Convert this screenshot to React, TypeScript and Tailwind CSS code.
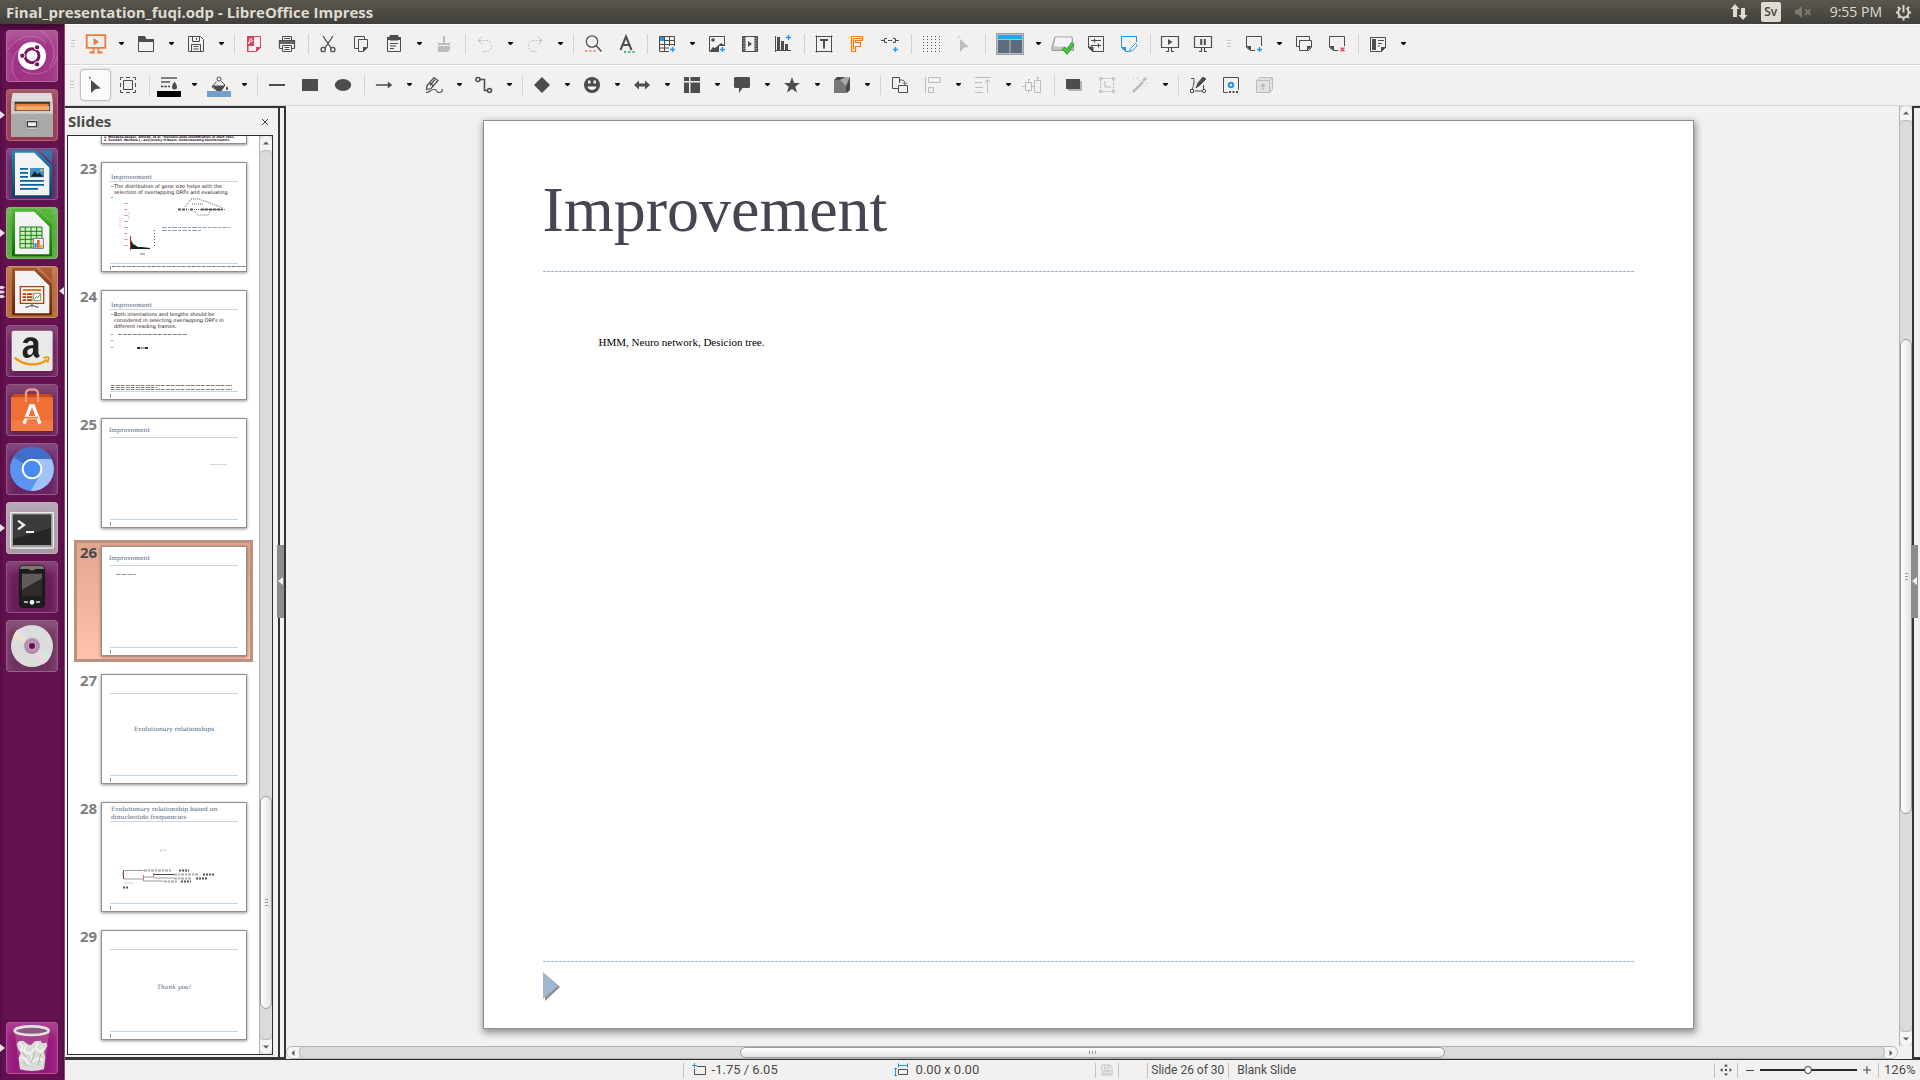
import React from "react";

const D = "#4d4d4d";
const G = "#bdbdbd";
const B = "#1e96f0";

const icons: Record<string, React.ReactNode> = {
  impress: (
    <g stroke="#ee7c37" fill="none" strokeWidth="1.5">
      <path d="M2.7 3.2h18.6v12.6H2.7zM9.5 16v4M14.5 16v4M5.5 20.5h5M13.5 20.5h5" strokeWidth="1.8" />
      <path d="M9.5 6l5.500 3.800-5.500 3.800z" fill="#ee7c37" stroke="none" />
    </g>
  ),
  open: (
    <g>
      <path d="M4 4h7l1.500 3H20v3H4z" fill={D} />
      <path d="M4.500 9.500h15v10h-15z" fill="none" stroke={D} />
    </g>
  ),
  save: (
    <g fill="none" stroke={D}>
      <path d="M4.500 4.500h12l3 3v12h-15z" />
      <path d="M8.500 4.500v5h7v-5M12.500 6v2M7.500 19.500v-7h9v7M9.500 14.500h5M9.500 17h5" />
    </g>
  ),
  pdf: (
    <g>
      <path d="M5.500 4.500h13v11l-4 4h-9v-15z" fill="none" stroke="#d8425a" />
      <path d="M5 4h7v10H5z" fill="#d8425a" />
      <path d="M6.500 12l2-6 2 3-4 1.500" fill="none" stroke="#f2f1ef" />
      <path d="M14 20v-5h5z" fill="#d8425a" />
      <path d="M5 13h1.500v7H5z" fill="#d8425a" />
    </g>
  ),
  print: (
    <g fill="none" stroke={D}>
      <path d="M7.500 8.500v-4h9v4M9 6.500h6" />
      <path d="M4.500 16.500v-8h15v8" strokeWidth="1.200" />
      <path d="M4 9h16v3H4z" fill={D} stroke="none" opacity=".85" />
      <path d="M4.500 16.500h3M16.500 16.500h3" />
      <path d="M7.500 13.500h9v6h-9zM9.500 15.500h5M9.500 17.500h5" fill="#f2f1ef" />
    </g>
  ),
  cut: (
    <g fill="none" stroke={D} strokeWidth="1.300">
      <path d="M7 4l8 12M17 4L9 16" />
      <circle cx="7.200" cy="17.500" r="2.200" />
      <circle cx="16.800" cy="17.500" r="2.200" />
    </g>
  ),
  copy: (
    <g fill="none" stroke={D}>
      <path d="M9 16.500H5.500v-12h10V7" />
      <path d="M9.500 7.500h9v8l-4 4h-5z" fill="#f2f1ef" />
      <path d="M14 20v-5h5z" fill={D} stroke="none" />
    </g>
  ),
  paste: (
    <g fill="none" stroke={D}>
      <path d="M5.500 5.500h13v14h-13z" />
      <path d="M8 3.500h8V8H8z" fill={D} />
      <path d="M8 11.500h8M8 14h6M8 16.500h4" />
      <path d="M5 5h14v3H5z" fill={D} stroke="none" />
    </g>
  ),
  brush: (
    <g fill={G}>
      <path d="M11 4h2v7h-2zM6 11h12v2H6zM6 14h12v3l-2 3H6z" />
    </g>
  ),
  undo: (
    <g fill="none" stroke={G}>
      <path d="M6 8.500h7a5.500 5.500 0 0 1 0 11h-3" strokeDasharray="2 1.500" />
      <path d="M9 4.500l-4 4 4 4" />
    </g>
  ),
  redo: (
    <g fill="none" stroke={G}>
      <path d="M18 8.500h-7a5.500 5.500 0 0 0 0 11h3" strokeDasharray="2 1.500" />
      <path d="M15 4.500l4 4-4 4" />
    </g>
  ),
  find: (
    <g fill="none" stroke={D}>
      <circle cx="11" cy="9.500" r="5.700" strokeWidth="1.200" />
      <path d="M15 13.500l5.500 6" strokeWidth="1.500" />
      <path d="M4 19h11" stroke="#f29079" strokeWidth="2" strokeDasharray="2.200 2" />
    </g>
  ),
  spell: (
    <g fill="none" stroke={D}>
      <path d="M6.500 18L12 4.500 17.500 18M8.500 13h7" strokeWidth="2" />
      <path d="M10 20h11" stroke="#4fb477" strokeWidth="2" strokeDasharray="2.200 2" />
    </g>
  ),
  table: (
    <g fill="none" stroke={D}>
      <path d="M4.500 4.500h15v15h-15zM4.500 8.500h15M4.500 12.500h15M4.500 16h15M9.500 4v16M14.500 4v16" />
      <path d="M5 5h4v4H5z" fill={B} stroke="none" />
      <path d="M14 14h7v7h-7z" fill="#f2f1ef" stroke="none" />
      <path d="M17.500 15v5M15 17.500h5" stroke={B} strokeWidth="1.300" />
    </g>
  ),
  image: (
    <g fill="none" stroke={D}>
      <path d="M4.500 4.500h15v15h-15z" />
      <circle cx="8" cy="8" r="1.800" fill={D} stroke="none" />
      <path d="M5 19l3-4 2 1 6-5 3 2v6z" fill={D} stroke="none" />
      <path d="M14 14h7v7h-7z" fill="#f2f1ef" stroke="none" />
      <path d="M17.500 15v5M15 17.500h5" stroke={B} strokeWidth="1.300" />
    </g>
  ),
  video: (
    <g>
      <path d="M4.500 4.500h15v15h-15z" fill="none" stroke={D} />
      <path d="M6 4v16M18 4v16" stroke={D} strokeWidth="3" />
      <path d="M6 6v13M18 6v13" stroke="#f2f1ef" strokeDasharray="1 1.500" />
      <path d="M10 9l4 3-4 3z" fill={D} />
    </g>
  ),
  chart: (
    <g>
      <path d="M4.500 4v16M4 18.500h16" stroke={D} />
      <path d="M6 5h3v14H6zM10 9h3v10h-3zM14 12h3v7h-3z" fill={D} />
      <path d="M17.500 3v5M15 5.500h5" stroke={B} strokeWidth="1.300" />
    </g>
  ),
  textbox: (
    <g fill="none" stroke={D}>
      <path d="M4.500 3.500v17M19.500 3.500v17M3.500 4.500h17M3.500 19.500h17" />
      <path d="M8 8h8M12 8v8.500" strokeWidth="2" />
    </g>
  ),
  fontwork: (
    <path d="M6.500 4.500h11v4h-7v2h5v4h-5v5h-4zM8.500 6.500v11M8.500 6.500h8" fill="none" stroke="#f47b16" strokeWidth="1.200" />
  ),
  link: (
    <g fill="none" stroke={D}>
      <path d="M9 6.500H6.500v4H9M15 6.500h2.500v4H15M10 8.500h4M3 8.500h3M18 8.500h3" />
      <path d="M17.500 15v5M15 17.500h5" stroke={B} strokeWidth="1.300" />
    </g>
  ),
  grid: (
    <path d="M4.500 4v16M8.500 4v16M12.500 4v16M16.500 4v16M20.500 4v16" stroke="#5a5a5a" strokeDasharray="1 2" />
  ),
  pointerOff: <path d="M8 7l9 8-5 .500L8 20zM6 4h1.500v1.500H6z" fill={G} />,
  master: (
    <g>
      <path d="M4 5h17l1.500 10v3.500H1V15z" fill="#c4c4c4" stroke="#9a9a9a" />
      <path d="M4.500 5.500h16v9H3z" fill="#f4f5fc" />
      <path d="M12 16l4 4 6-9" fill="none" stroke="#1f8a1f" strokeWidth="3.600" />
      <path d="M12 16l4 4 6-9" fill="none" stroke="#49d23c" strokeWidth="2" />
    </g>
  ),
  settings: (
    <g fill="none" stroke={D}>
      <path d="M8 19.500h11.500v-15h-15V16" />
      <path d="M7 8.500h10M7 13.500h10M10.500 6.500v4M14.500 11.500v4" strokeWidth="1.200" />
      <path d="M4 15h5v5z" fill={D} />
    </g>
  ),
  editSlide: (
    <g fill="none" stroke={B}>
      <path d="M12 19.500H9l-4.500-4v-11h15V10" />
      <path d="M4 15h5v5z" fill={B} stroke="none" />
      <path d="M12.500 19.500l1-3 5-5 2 2-5 5z" />
    </g>
  ),
  play: (
    <g fill="none" stroke={D}>
      <path d="M3.500 4.500h17v11h-17zM10.500 16v3M13.500 16v3M8 19.500h3M13 19.500h3" strokeWidth="1.200" />
      <path d="M10 7l4.500 3-4.500 3z" fill={D} stroke="none" />
    </g>
  ),
  pause: (
    <g fill="none" stroke={D}>
      <path d="M3.500 4.500h17v11h-17zM10.500 16v3M13.500 16v3M8 19.500h3M13 19.500h3" strokeWidth="1.200" />
      <path d="M10.200 7v6M13.800 7v6" strokeWidth="2" />
    </g>
  ),
  newSlide: (
    <g fill="none" stroke={D}>
      <path d="M13 18.500H9l-4.500-3v-11h15V14" />
      <path d="M4 14h5v5z" fill={D} stroke="none" />
      <path d="M17.500 15v5M15 17.500h5" stroke={B} strokeWidth="1.300" />
    </g>
  ),
  dupSlide: (
    <g fill="none" stroke={D}>
      <path d="M7 14.500H4.500v-10h13V8" />
      <path d="M7.500 8.500h12v7l-3 3h-9z" fill="#f2f1ef" />
      <path d="M15 19v-5h5z" fill={D} stroke="none" />
    </g>
  ),
  delSlide: (
    <g fill="none" stroke={D}>
      <path d="M13 18.500H9l-4.500-3v-11h15V14" />
      <path d="M4 14h5v5z" fill={D} stroke="none" />
      <path d="M15.500 15.500l4 4M19.500 15.500l-4 4" stroke="#d8425a" strokeWidth="1.300" />
    </g>
  ),
  layout: (
    <g fill="none" stroke={D}>
      <path d="M4.500 5.500h15v10l-4 4h-11z" />
      <path d="M6 7h4v11H6z" fill={D} stroke="none" />
      <path d="M12 8.500h6M12 11.500h4M12 14h2" />
      <path d="M15 20v-5h5z" fill={D} stroke="none" />
    </g>
  ),
  pointer: <path d="M8 7l10 8.500-5.500.500L8 20zM6 4h1.500v1.500H6z" fill={D} />,
  group: (
    <g fill="none" stroke={D}>
      <path d="M7.500 7.500h9v9h-9z" />
      <path d="M4.500 7V4.500H7M17 4.500h2.500V7M19.500 17v2.500H17M7 19.500H4.500V17M10 4.500h4M10 19.500h4M4.500 10v4M19.500 10v4" />
    </g>
  ),
  lineColor: (
    <g>
      <path d="M4 5h16" stroke={D} strokeWidth="1.400" />
      <path d="M4 9h9" stroke={D} strokeWidth="1.400" />
      <path d="M4 13.500h9" stroke={D} strokeWidth="1.600" strokeDasharray="2.500 1" />
      <path d="M17.500 8.500c2 3 2.500 4 2.500 5.500a2.500 2.500 0 0 1-5 0c0-1.500.500-2.500 2.500-5.500z" fill={D} />
      <path d="M0 18h24v6H0z" fill="#000" />
    </g>
  ),
  fillColor: (
    <g>
      <circle cx="12" cy="6" r="2" fill="none" stroke={D} />
      <path d="M9.500 8.500L5 14l5.500 3.500h4L18 12l-4-4" fill="none" stroke={D} />
      <path d="M5 12.500h13L14 18h-4z" fill={D} />
      <path d="M20 13c1.500 2 1.500 4 0 4s-1.500-2 0-4z" fill={D} />
      <path d="M0 18h24v6H0z" fill="#729fcf" />
    </g>
  ),
  line: <path d="M4 12h16" stroke={D} strokeWidth="2" />,
  rect: <path d="M4 6h16v12H4z" fill={D} />,
  ellipse: <ellipse cx="12" cy="12" rx="8.200" ry="6" fill={D} />,
  arrow: <path d="M4 11.500h12V9l4 3-4 3v-2.500H4z" fill={D} stroke={D} strokeWidth=".5" />,
  pencil: (
    <g fill="none" stroke={D} strokeWidth="1.200">
      <path d="M5 12.500l7-8 4 3-7 8-4.500 1z" />
      <path d="M8 10l3.500 3M13 6.500l-5 6" />
      <path d="M4 19.500c4 0 4-3 8-3s2 3 5 3c2.500 0 4-1 3-3.500" />
    </g>
  ),
  connector: (
    <g fill="none" stroke={D} strokeWidth="1.600">
      <circle cx="6" cy="6.500" r="2" />
      <circle cx="17.500" cy="17.500" r="2" />
      <path d="M8 6.500h4.500v11H16" />
    </g>
  ),
  diamond: <path d="M12 4l8 8-8 8-8-8z" fill={D} />,
  smiley: (
    <g>
      <circle cx="12" cy="12" r="8" fill={D} />
      <path d="M8 7.500h2.500v3H8zM13.500 7.500H16v3h-2.500z" fill="#f2f1ef" />
      <path d="M7.500 13.500h9c-.500 4.500-8.500 4.500-9 0z" fill="#f2f1ef" />
    </g>
  ),
  dblArrow: <path d="M4 12l5-4.500v3h6v-3l5 4.500-5 4.500v-3H9v3z" fill={D} />,
  flow: <path d="M4 4h5v4H4zM10.500 4H20v4h-9.500zM4 9.500h5V20H4zM10.500 9.500H20V20h-9.500z" fill={D} />,
  callout: <path d="M5.500 4h13Q20 4 20 5.500v8q0 1.500-1.500 1.500h-6L9 20v-5H5.500Q4 15 4 13.500v-8Q4 4 5.500 4z" fill={D} />,
  star: <path d="M12 4l2.100 6H20l-4.700 3.700L17 19.500 12 16l-5 3.500 1.700-5.800L4 10h5.900z" fill={D} />,
  cube: (
    <g>
      <path d="M4 7l3-3h13v13l-3 3z" fill="#4a4a4a" />
      <path d="M4 7h12v13H4z" fill="#777" />
      <path d="M10 7l5-3h5l-4 9z" fill="#a8a8a8" />
    </g>
  ),
  rotate: (
    <g fill="none" stroke={D}>
      <path d="M12 15.500H4.500v-11h7V10" />
      <path d="M10.500 12.500h9v7h-9z" fill="#f2f1ef" />
      <path d="M12 7c4 0 5 1 5 4M15 9.500l2 2 2-2" />
    </g>
  ),
  align: (
    <g fill="none" stroke={G}>
      <path d="M4.500 4v16M7.500 4.500h12v5h-12zM7.500 14.500h5v5h-5z" />
    </g>
  ),
  arrange: <path d="M4 4.500h16M4 9.500h7M4 14.500h8M4 19.500h8M16.500 20V7M13.500 9.500l3-3 3 3" fill="none" stroke={G} />,
  distribute: <path d="M4.500 9.500h6v8h-6zM13.500 7.500h6v12h-6zM7.500 6v3M7.500 18v2.500M16.500 4v3M1 13.500h3M11 13.500h2M7 6.500h2M16 4.500h2" fill="none" stroke={G} />,
  shadow: (
    <g>
      <path d="M6 8h14v10H6z" fill="#b5b5b5" />
      <path d="M4 6h14v10H4z" fill={D} />
    </g>
  ),
  crop: (
    <g fill="none" stroke={G}>
      <path d="M7 5.500h10M7 18.500h10M5.500 7v10M18.500 7v10" strokeDasharray="2 1" />
      <path d="M4.500 4.500h2v2h-2zM17.500 4.500h2v2h-2zM4.500 17.500h2v2h-2zM17.500 17.500h2v2h-2zM10 8v6h6" />
    </g>
  ),
  wand: (
    <g stroke={G} fill="none">
      <path d="M5 19L15 9" strokeWidth="2.600" />
      <path d="M15 8l3-3" strokeWidth="2.600" />
      <path d="M5.500 5v1M9.500 4v2M12 7v1M16 13v1M18.500 10v1" />
    </g>
  ),
  points: (
    <g fill="none" stroke={D}>
      <path d="M5 5.500h3c0 4 0 7-2 11M8.500 18h8M17.500 12v4" />
      <path d="M4.500 16.500h3v3h-3z" />
      <circle cx="18" cy="18" r="1.700" />
      <path d="M10 15l2-5 5-6 3 2-6 6z" fill={D} />
    </g>
  ),
  glue: (
    <g fill="none" stroke={D}>
      <path d="M9 19.500H4.500v-15h15v12" />
      <path d="M10 19h10" strokeWidth="2" strokeDasharray="2 1.500" />
      <circle cx="12" cy="12" r="2.200" stroke={B} strokeWidth="2" />
    </g>
  ),
  extrude: (
    <g stroke={G} fill="#e2e2e2">
      <path d="M4.500 7.500l3-3h13v12l-3 3h-13zM4.500 7.500h13v12M17.500 7.500l3-3" />
      <path d="M11 17v-5M8.500 13.500L11 11l2.500 2.500" fill="none" strokeWidth="1.500" />
    </g>
  ),
};

type Item = { k: "b" | "s" | "g" | "big"; i?: string; n?: string; dd?: boolean; on?: boolean };
const b = (i: string, n: string): Item => ({ k: "b", i, n });
const d = (i: string, n: string): Item => ({ k: "b", i, n, dd: true });
const sep: Item = { k: "s" };

const row1: Item[] = [
  d("impress", "New"), d("open", "Open"), d("save", "Save"), sep,
  b("pdf", "Export as PDF"), b("print", "Print"), sep,
  b("cut", "Cut"), b("copy", "Copy"), d("paste", "Paste"), b("brush", "Clone formatting"), sep,
  d("undo", "Undo"), d("redo", "Redo"), sep,
  b("find", "Find and replace"), b("spell", "Spelling"), sep,
  d("table", "Table"), b("image", "Image"), b("video", "Audio or video"), b("chart", "Chart"), sep,
  b("textbox", "Text box"), b("fontwork", "Fontwork"), b("link", "Hyperlink"), sep,
  b("grid", "Display grid"), b("pointerOff", "Helplines while moving"), sep,
  { k: "big", n: "Display views" },
  b("master", "Master slide"), b("settings", "Slide properties"), b("editSlide", "Edit slide"), sep,
  b("play", "Start from first slide"), b("pause", "Start from current slide"), { k: "g" },
  d("newSlide", "New slide"), b("dupSlide", "Duplicate slide"), b("delSlide", "Delete slide"), sep,
  d("layout", "Slide layout"),
];

const row2: Item[] = [
  { ...b("pointer", "Select"), on: true }, b("group", "Zoom and pan"), sep,
  d("lineColor", "Line color"), d("fillColor", "Fill color"), sep,
  b("line", "Line"), b("rect", "Rectangle"), b("ellipse", "Ellipse"), sep,
  d("arrow", "Lines and arrows"), d("pencil", "Curve"), d("connector", "Connector"), sep,
  d("diamond", "Basic shapes"), d("smiley", "Symbol shapes"), d("dblArrow", "Block arrows"), d("flow", "Flowchart"),
  d("callout", "Callouts"), d("star", "Stars"), d("cube", "3D objects"), sep,
  b("rotate", "Rotate"), d("align", "Align"), d("arrange", "Arrange"), b("distribute", "Distribute"), sep,
  b("shadow", "Shadow"), b("crop", "Crop"), d("wand", "Filter"), sep,
  b("points", "Edit points"), b("glue", "Glue points"), b("extrude", "Toggle extrusion"),
];

const Grip = () => (
  <div className="flex h-full flex-col items-center justify-center gap-[2px]" aria-hidden="true">
    <i className="h-px w-1 bg-[#c9c8c6]" />
    <i className="h-px w-1 bg-[#c9c8c6]" />
    <i className="h-px w-1 bg-[#c9c8c6]" />
  </div>
);

const Drop = ({ label }: { label: string }) => (
  <button aria-label={label + " options"} className="flex h-8 w-[17px] items-center justify-center">
    <svg viewBox="0 0 7 6" className="h-[6px] w-[7px]"><path d="M1 1h5v1L4 4H3L1 2z" fill="#111" /></svg>
  </button>
);

function ToolItem({ it }: { it: Item }) {
  if (it.k === "s") return <div className="flex w-2 justify-center"><i className="h-5 w-px bg-[#d4d3d1]" /></div>;
  if (it.k === "g") return <div className="w-[18px]"><Grip /></div>;
  if (it.k === "big")
    return (
      <div className="flex items-center">
        <button aria-label={it.n} className="flex h-8 w-[41px] items-center justify-center">
          <svg viewBox="0 0 28 22" className="h-[22px] w-7">
            <path d="M.500.500h27v21H.500z" fill="#b9bcc0" stroke="#9c9fa3" />
            <path d="M2 2h24v4H2z" fill="#1fa8ef" />
            <path d="M2 7h11.500v13H2zM14.500 7H26v13H14.500z" fill="#5d6c7c" />
          </svg>
        </button>
        <Drop label={it.n!} />
      </div>
    );
  return (
    <div className="flex items-center">
      <button
        aria-label={it.n}
        className={
          it.on
            ? "mx-px flex h-8 w-[31px] items-center rounded border border-[#c3c2c0] bg-[#fbfbfa] pl-[2px] shadow-[0_0_2px_rgba(0,0,0,.15)]"
            : "flex h-8 w-[33px] items-center pl-1"
        }
      >
        <svg viewBox="0 0 24 24" className="h-6 w-6 shrink-0">{icons[it.i!]}</svg>
      </button>
      {it.dd && <Drop label={it.n!} />}
    </div>
  );
}

const Fold = ({ a, c, id }: { a: string; c: string; id: string }) => (
  <g>
    <defs>
      <linearGradient id={id} x1="0" y1="0" x2="0" y2="1">
        <stop offset="0" stopColor={a} />
        <stop offset="1" stopColor={c} />
      </linearGradient>
    </defs>
    <path d="M22 6h68l48 46v96H22q-4 0-4-4V10q0-4 4-4z" fill={`url(#${id})`} />
    <path d="M100 6h38v38z" fill={a} opacity=".75" />
    <path d="M27 14h57l46 46v82H27z" fill="#f3f3f3" />
    <path d="M84 14l46 46h-8L80 20z" fill="#fff" />
  </g>
);

const launcher: { n: string; bg: string; run?: boolean; active?: boolean; art: React.ReactNode }[] = [
  {
    n: "Search your computer", bg: "bg-[#a03585]",
    art: (
      <g>
        <path d="M0 70C20 20 90 0 120 40M156 60c0 60-60 90-110 60M40 156C0 120 20 60 60 40M90 0c50 10 70 70 40 110" fill="none" stroke="#d08bbd" strokeWidth="3" opacity=".6" />
        <circle cx="78" cy="78" r="42" fill="#fff" />
        <circle cx="78" cy="77" r="21" fill="none" stroke="#7a1260" strokeWidth="9" />
        <g fill="#7a1260" stroke="#fff" strokeWidth="3">
          <circle cx="49" cy="77" r="8" /><circle cx="93" cy="52" r="8" /><circle cx="93" cy="103" r="8" />
        </g>
      </g>
    ),
  },
  {
    n: "Files", bg: "bg-[#93384a]", run: true,
    art: (
      <g>
        <path d="M20 14h116l5 30v98H15V44z" fill="#c9c9c9" />
        <path d="M20 12h116l4 24H16z" fill="#dcdcdc" />
        <path d="M26 38h106v28H26z" fill="#3a3532" />
        <path d="M28 44h100v20H28z" fill="#e8803a" /><path d="M32 52h98v12H32z" fill="#f3b06c" />
        <path d="M15 66h126v74q0 4-4 4H19q-4 0-4-4z" fill="#a9a9a9" />
        <path d="M15 66h126v8H15z" fill="#cdcdcd" />
        <rect x="58" y="90" width="40" height="32" rx="8" fill="#c9c9c9" stroke="#8b8b8b" strokeWidth="2" />
        <rect x="64" y="98" width="28" height="15" fill="#eee" stroke="#3c3c3c" strokeWidth="4" />
      </g>
    ),
  },
  {
    n: "LibreOffice Writer", bg: "bg-[#5f2864]",
    art: (
      <g>
        <Fold id="fw" a="#2a86b5" c="#0a3f6b" />
        <path d="M42 60h24v5H42zM42 72h24v5H42zM42 84h24v5H42zM42 96h72v5H42zM42 108h72v5H42zM42 120h54v5H42z" fill="#0e6196" />
        <path d="M72 60h42v28H72z" fill="#3c92c4" />
        <path d="M74 86l12-16 8 9 7-5 11 12z" fill="#222" /><circle cx="107" cy="67" r="4" fill="#f4c430" />
      </g>
    ),
  },
  {
    n: "LibreOffice Calc", bg: "bg-[#56a83d]", run: true,
    art: (
      <g>
        <Fold id="fc" a="#4bbb2e" c="#0e6b08" />
        <path d="M42 60h66v63H42z" fill="#c9f0bd" stroke="#1d7f14" strokeWidth="3" />
        <path d="M42 73h66M42 85h66M42 97h66M42 110h66M58 60v63M75 60v63M92 60v63" stroke="#1d7f14" strokeWidth="3" />
        <path d="M82 94h30v30H82z" fill="#f4f4f4" stroke="#777" strokeWidth="3" />
        <path d="M85 108h7v14h-7z" fill="#2e9bdc" /><path d="M93 99h8v23h-8z" fill="#e36a25" /><path d="M102 114h8v8h-8z" fill="#e9b91c" />
      </g>
    ),
  },
  {
    n: "LibreOffice Impress", bg: "bg-[#b5673b]", run: true, active: true,
    art: (
      <g>
        <Fold id="fi" a="#a4532a" c="#6a2404" />
        <path d="M43 62h70v50H43z" fill="#fdf5ee" stroke="#a84313" strokeWidth="4" />
        <path d="M51 69h54v6H51z" fill="#d97a2e" />
        <path d="M50 82h10v5H50zM50 91h10v5H50zM50 100h10v5H50zM63 82h16v5H63zM63 91h16v5H63zM63 100h16v5H63z" fill="#a33f10" />
        <path d="M82 82h22v22H82z" fill="#fff" stroke="#888" strokeWidth="3" />
        <path d="M85 100l6-8 4 3 7-9" fill="none" stroke="#2fa82f" strokeWidth="3" />
        <path d="M58 124q20-4 20-10 0 6 20 10M78 112v12" fill="none" stroke="#777" strokeWidth="4" />
      </g>
    ),
  },
  {
    n: "Amazon", bg: "bg-[#6a2159]",
    art: (
      <g>
        <rect x="17" y="17" width="123" height="121" rx="7" fill="#e9e9e9" />
        <path d="M92 100c-8-6-9-9-10-12-12 16-32 15-32-4 0-18 14-23 32-24v-5c0-10-16-11-17 0l-14-2c4-22 46-22 46 2v26c0 6 2 9 5 12zM81 70c-12 0-17 4-17 12 0 12 16 11 17-4z" fill="#222" />
        <path d="M26 98c30 26 70 26 98 6" fill="none" stroke="#f79400" strokeWidth="7" />
        <path d="M112 99c18-6 20-4 12 14" fill="none" stroke="#f79400" strokeWidth="5" />
      </g>
    ),
  },
  {
    n: "Ubuntu Software", bg: "bg-[#6b2257]",
    art: (
      <g>
        <path d="M15 42l8-12h112l6 12z" fill="#c9471a" />
        <path d="M15 40h126v101H15z" fill="#ef6f35" /><path d="M15 110h126v31H15z" fill="#f37c42" />
        <path d="M60 54V28q0-12 18-12t18 12v26" fill="none" stroke="#f0a07a" strokeWidth="7" />
        <path d="M54 119l20-53h8l20 53M56 101h44" fill="none" stroke="#fff" strokeWidth="10" />
        <path d="M54 101h42" stroke="#ef6f35" strokeWidth="5" />
      </g>
    ),
  },
  {
    n: "Chromium", bg: "bg-[#6a2463]",
    art: (
      <g>
        <circle cx="78" cy="78" r="66" fill="#5a93f2" />
        <path d="M78 78L22 43a66 66 0 0 1 118 12z" fill="#3f6fcb" />
        <path d="M78 48h58a66 66 0 0 1-62 96l30-52z" fill="#a1c2fa" />
        <circle cx="78" cy="78" r="31" fill="#fff" /><circle cx="78" cy="78" r="25" fill="#4a8af4" />
      </g>
    ),
  },
  {
    n: "Terminal", bg: "bg-[#a999a7]", run: true,
    art: (
      <g>
        <rect x="12" y="30" width="132" height="110" rx="4" fill="#ececec" />
        <rect x="16" y="34" width="124" height="102" fill="#9b9b9b" />
        <path d="M21 38h114v91H21z" fill="#262626" /><path d="M21 38h114v40L21 110z" fill="#3b3b3b" />
        <path d="M36 56l18 13-18 13" fill="none" stroke="#eee" strokeWidth="7" /><path d="M60 90h24" stroke="#eee" strokeWidth="6" />
      </g>
    ),
  },
  {
    n: "Phone", bg: "bg-[#6b1c5a]",
    art: (
      <g>
        <rect x="40" y="13" width="76" height="127" rx="12" fill="#1d1d1d" stroke="#111" strokeWidth="2" />
        <path d="M52 14h52q10 0 11 10H41q1-10 11-10z" fill="#777" />
        <path d="M48 38h60v68H48z" fill="#2c2c2c" /><path d="M48 38h60v14L48 86z" fill="#5d5d5d" />
        <path d="M70 26h16" stroke="#999" strokeWidth="3" />
        <circle cx="78" cy="124" r="7" fill="#fff" /><path d="M54 123h12M90 123h12" stroke="#ddd" strokeWidth="5" />
      </g>
    ),
  },
  {
    n: "Disc", bg: "bg-[#70305f]",
    art: (
      <g>
        <circle cx="78" cy="78" r="63" fill="#dcdcdc" />
        <path d="M78 78L20 52q4-12 14-24z" fill="#f0e2cc" /><path d="M78 78L32 32l12-8z" fill="#d6e2ee" />
        <path d="M78 78l58 26q-4 10-14 22z" fill="#cfe9da" /><path d="M78 78l46 46-14 10z" fill="#efd6e2" />
        <circle cx="78" cy="78" r="24" fill="#b490b0" /><circle cx="78" cy="78" r="11" fill="#64104f" stroke="#c9b8c6" strokeWidth="3" />
      </g>
    ),
  },
  {
    n: "Trash", bg: "bg-[#98187b]", run: true,
    art: (
      <g>
        <path d="M26 30h104l-14 106q-38 12-76 0z" fill="#c07fb2" opacity=".4" />
        <path d="M32 66l6-8 14-2 12 10 10 4 12-12 18-2 4 8 14-2 2 10-10 18 4 16-4 36q-36 10-72 0l-4-34 6-16-8-12z" fill="#d9dbd6" />
        <path d="M40 62l10 12-6 14M60 70l-6 18 18 8 12-16M96 62l-8 16 14 12 12-10M44 104l14 6 10 18M76 100l6 18 16-10 14 8" fill="none" stroke="#f7f8f5" strokeWidth="5" />
        <path d="M50 92l10 14M86 92l-10 30M104 96l-8 34M52 122l14 10" fill="none" stroke="#aeb1ab" strokeWidth="3" />
        <ellipse cx="77" cy="26" rx="51" ry="13" fill="#8d5b80" stroke="#e2e3de" strokeWidth="8" />
      </g>
    ),
  },
];

const LauncherItem = ({ l }: { l: (typeof launcher)[number] }) => (
  <div className="relative flex w-full justify-center">
    {l.run && (
      <svg viewBox="0 0 5 12" className="absolute left-0 top-5 h-3 w-[5px]">
        {l.active ? <path d="M0 0h3l2 1.500-2 1.500H0zM0 4.500h3L5 6 3 7.500H0zM0 9h3l2 1.500L3 12H0z" fill="#d9d4d8" /> : <path d="M0 2l5 4-5 4z" fill="#e6e1e5" />}
      </svg>
    )}
    <button aria-label={l.n} className={"h-[52px] w-[52px] overflow-hidden rounded-[4px] border border-white/25 shadow-[inset_0_8px_10px_rgba(255,255,255,.18)] " + l.bg}>
      <svg viewBox="3 3 150 150" className="h-[50px] w-[50px]">{l.art}</svg>
    </button>
    {l.active && (
      <svg viewBox="0 0 5 8" className="absolute right-0 top-[21px] h-2 w-[5px]"><path d="M5 0v8L0 4z" fill="#e6e1e5" /></svg>
    )}
  </div>
);

const Rule = () => <div className="mx-2 h-px shrink-0 bg-[#c5d6e2]" />;
const serif = "font-['DejaVu_Serif'] text-[6px] leading-[8px] text-[#4d5f78]";

const Fine = ({ w }: { w: string }) => (
  <i className={"block h-px bg-[repeating-linear-gradient(90deg,#777_0_3px,#ccc_3px_5px,#888_5px_9px,#ddd_9px_10px)] " + w} />
);

const Bullet = () => <i className="block h-px w-[2px] bg-[#7f9fc0]" />;

function Preview({ head, foot, children }: { head?: React.ReactNode; foot?: boolean; children?: React.ReactNode }) {
  return (
    <div className="flex h-[110px] w-[146px] flex-col overflow-hidden border border-[#8f8f8f] bg-white shadow-[0_1px_3px_rgba(0,0,0,.45)]">
      <div className={"flex h-[18px] shrink-0 flex-col justify-end pl-[9px] " + serif}>{head}</div>
      <Rule />
      <div className="flex flex-1 flex-col overflow-hidden">{children}</div>
      <Rule />
      <div className="flex h-[7px] shrink-0 gap-px pl-2 pt-[2px]">
        <i className="block h-[3px] w-px bg-[#71839b]" />
        {foot && <Fine w="w-[134px]" />}
      </div>
    </div>
  );
}

const body = "font-['DejaVu_Sans'] text-[5px] leading-[6px] text-[#2c1426] whitespace-nowrap";

const thumbs: { n: number; el: React.ReactNode }[] = [
  {
    n: 23,
    el: (
      <Preview foot head={<span>Improvement</span>}>
        <div className="flex gap-px pl-[9px] pt-px">
          <div className="pt-[3px]"><Bullet /></div>
          <p className={body}>The distribution of gene size helps with the<br />selection of overlapping ORFs and evaluating</p>
        </div>
        <div className="pl-[9px] pt-[2px]"><Bullet /></div>
        <svg viewBox="0 0 144 60" className="h-[60px] w-[144px]">
          <path d="M24 5v48" stroke="#d88" strokeWidth="3" strokeDasharray="1 5" />
          <path d="M18 20v10M27 14v8" stroke="#d99" strokeDasharray="1 1" />
          <path d="M28.500 38v14" stroke="#c22" />
          <path d="M29 51V42l2 4 2 1 3 2 4 0 8 1v1z" fill="#0d2a1c" />
          <path d="M52.500 32v18" stroke="#555" strokeDasharray="1 2" /><path d="M38 56h5" stroke="#777" />
          <path d="M76 11.500h9M88 11.500h4M99 11.500h22" stroke="#555" strokeWidth="2" strokeDasharray="3 1" />
          <path d="M83 9l6-8h8l24 9M92 13l4 4h10l3-5M90 6h12M76 11.500h48" fill="none" stroke="#666" strokeDasharray="1 1" />
          <path d="M60 29.500h68M60 32.500h40" stroke="#78909c" strokeWidth=".8" strokeDasharray="5 1 3 1" />
        </svg>
      </Preview>
    ),
  },
  {
    n: 24,
    el: (
      <Preview head={<span>Improvement</span>}>
        <div className="flex gap-px pl-[9px] pt-px">
          <div className="pt-[3px]"><Bullet /></div>
          <p className={body}>Both orientations and lengths should be<br />considered in selecting overlapping ORFs in<br />different reading frames.</p>
        </div>
        <div className="flex gap-[5px] pl-[9px] pt-[5px]"><Bullet /><Fine w="w-[69px]" /></div>
        <div className="pl-[9px] pt-[5px]"><Bullet /></div>
        <div className="flex gap-6 pl-[9px] pt-[6px]"><Bullet /><i className="block h-[2px] w-[11px] border-x-[3px] border-[#333] bg-[#aaa]" /></div>
        <div className="mt-auto flex flex-col gap-px pb-px pl-[9px]"><Fine w="w-[121px]" /><Fine w="w-[46px]" /><Fine w="w-[121px]" /></div>
      </Preview>
    ),
  },
  {
    n: 25,
    el: (
      <Preview head={<span className="-ml-[2px] mb-[3px]">Improvement</span>}>
        <div className="pl-[108px] pt-[26px]"><i className="block h-px w-[17px] bg-[#d5d5d5]" /></div>
      </Preview>
    ),
  },
  {
    n: 26,
    el: (
      <Preview head={<span className="-ml-[2px] mb-[3px]">Improvement</span>}>
        <div className="pl-[14px] pt-2"><i className="block h-px w-5 bg-[repeating-linear-gradient(90deg,#999_0_4px,#ccc_4px_6px)]" /></div>
      </Preview>
    ),
  },
  { n: 27, el: <Preview><p className={"pt-[31px] text-center " + serif}>Evolutionary relationships</p></Preview> },
  {
    n: 28,
    el: (
      <Preview head={<span>Evolutionary relationship based on<br />dinucleotide frequencies</span>}>
        <svg viewBox="0 0 144 80" className="h-20 w-36">
          <path d="M58.500 30v-2h6M22.500 61h9" fill="none" stroke="#ccc" />
          <path d="M21.500 57V48.500h20M21.500 57h20M41.500 59v-4h10v-2M41.500 59h20M51.500 56h20" fill="none" stroke="#999" />
          <path d="M52 52.500h20M21.500 49v8" stroke="#444" />
          <path d="M41.500 53v3M51.500 51v3M21 50v4" stroke="#d66" />
          <path d="M42 48.500h28M72 52.500h24M72 56.500h18M62 59.500h13" stroke="#aaa" strokeWidth="2" strokeDasharray="3 1 2 1" />
          <path d="M77 48.500h10M101 52.500h11M94 56.500h11M79 59.500h10M21 65.500h5" stroke="#555" strokeWidth="2" strokeDasharray="2 1" />
        </svg>
      </Preview>
    ),
  },
  { n: 29, el: <Preview><p className={"pt-[33px] text-center italic " + serif}>Thank you!</p></Preview> },
];

const Tri = ({ dir }: { dir: "up" | "down" | "left" | "right" }) => (
  <svg viewBox="0 0 8 8" className="h-2 w-2">
    <path d={{ up: "M1 5.500L4 2.500l3 3z", down: "M1 2.500h6l-3 3z", left: "M5.500 1v6l-3-3z", right: "M2.500 1l3 3-3 3z" }[dir]} fill="#5a5a5a" />
  </svg>
);

function VScroll({ before, thumb, after }: { before: string; thumb: string; after: string }) {
  return (
    <div className="flex w-[13px] shrink-0 flex-col border-l border-[#b5b4b2] bg-[#dcdbd9]">
      <button aria-label="Scroll up" className="flex h-[14px] items-center justify-center rounded-t-full bg-[#f4f4f3]"><Tri dir="up" /></button>
      <div className={"rounded-t-full border-t border-[#b5b4b2] " + before} />
      <div className={"flex flex-col items-center justify-center gap-[2px] rounded-full border border-[#9c9b99] bg-gradient-to-r from-white to-[#e4e3e1] " + thumb}>
        <i className="h-px w-[3px] bg-[#999]" /><i className="h-px w-[3px] bg-[#999]" /><i className="h-px w-[3px] bg-[#999]" />
      </div>
      <div className={"rounded-b-full border-b border-[#b5b4b2] " + after} />
      <button aria-label="Scroll down" className="flex h-[14px] items-center justify-center rounded-b-full bg-[#f4f4f3]"><Tri dir="down" /></button>
    </div>
  );
}

const Handle = ({ label }: { label: string }) => (
  <button aria-label={label} className="absolute -left-[3px] top-[46%] flex h-[73px] w-[7px] items-center justify-center bg-[#8c8c8a]">
    <svg viewBox="0 0 5 8" className="h-2 w-[5px]"><path d="M5 0v8L0 4z" fill="#f2f1ef" /></svg>
  </button>
);

const VSep = () => <i className="h-[15px] w-px shrink-0 bg-[#c4c3c1]" />;

export default function App() {
  return (
    <div className="flex h-screen flex-col overflow-hidden bg-[#f2f1ef] font-['Open_Sans',sans-serif] text-[#4a4a4a]">
      <header className="flex h-6 shrink-0 items-center justify-between bg-gradient-to-b from-[#5a574d] to-[#403f3a] pl-[6px] pr-2 text-[#dfdbd2]">
        <h1 className="text-[15px] font-bold leading-6">Final_presentation_fuqi.odp - LibreOffice Impress</h1>
        <div className="flex items-center">
          <button aria-label="Network" className="mr-[13px]">
            <svg viewBox="0 0 18 18" className="h-[18px] w-[18px]" fill="#dfdbd2"><path d="M5 1l4.500 5H7v8H3V6H.500zM13 17l4.500-5H15V5h-4v7H8.500z" /></svg>
          </button>
          <button aria-label="Keyboard layout" className="mr-[13px] h-5 w-5 rounded-[2px] bg-[#dfdbd2] text-[12px] font-semibold leading-5 text-[#45443f]">Sv</button>
          <button aria-label="Sound muted" className="mr-[18px]">
            <svg viewBox="0 0 18 14" className="h-[14px] w-[18px]"><path d="M1 4.500h3L8 1v12L4 9.500H1z" fill="#7b7972" /><path d="M11 4.500l5.500 5.500M16.500 4.500L11 10" stroke="#7b7972" strokeWidth="1.800" /></svg>
          </button>
          <time className="mr-[13px] text-[14px] leading-6">9:55 PM</time>
          <button aria-label="System">
            <svg viewBox="0 0 18 18" className="h-[17px] w-[17px]" fill="none" stroke="#dfdbd2">
              <path d="M6 4.300a5.500 5.500 0 1 0 6 0" strokeWidth="2" /><path d="M9 1v8" strokeWidth="2" />
              <path d="M1 9h2M15 9h2M9 15v2.500M3 3l1.500 1.500M15 3l-1.500 1.500M3.300 14.700l1.400-1.400M14.700 14.700l-1.400-1.400" strokeWidth="2" />
            </svg>
          </button>
        </div>
      </header>

      <div className="flex min-h-0 flex-1">
        <nav aria-label="Launcher" className="flex w-[65px] shrink-0 flex-col gap-[7px] border-r border-[#8a4a7c] bg-[#641150] pb-[6px] pt-[6px] shadow-[inset_0_5px_5px_rgba(30,0,25,.45)]">
          {launcher.map((l) => (
            <div key={l.n} className="last:mt-auto"><LauncherItem l={l} /></div>
          ))}
        </nav>

        <main className="flex min-w-0 flex-1 flex-col">
          <div role="toolbar" aria-label="Standard" className="flex h-[41px] shrink-0 items-center border-b border-t border-t-white border-b-[#d6d5d3] pb-[2px]">
            <div className="w-[15px]"><Grip /></div>
            {row1.map((it, i) => <ToolItem key={i} it={it} />)}
          </div>
          <div role="toolbar" aria-label="Drawing" className="flex h-[41px] shrink-0 items-center border-b border-t border-t-white border-b-[#d6d5d3] pb-[2px]">
            <div className="w-[14px]"><Grip /></div>
            {row2.map((it, i) => <ToolItem key={i} it={it} />)}
          </div>

          <div className="flex min-h-0 flex-1">
            <aside className="flex w-[213px] shrink-0 flex-col border-b-[3px] border-t-2 border-[#353535] pl-[2px] pr-[5px]">
              <div className="flex h-[27px] shrink-0 items-center justify-between pl-px">
                <h2 className="text-[15px] font-bold leading-[27px]">Slides</h2>
                <button aria-label="Close" className="flex h-4 w-4 shrink-0 items-center justify-center">
                  <svg viewBox="0 0 8 8" className="h-2 w-2 shrink-0"><path d="M1 1l6 6M7 1L1 7" stroke="#444" /></svg>
                </button>
              </div>
              <div className="mb-[2px] flex min-h-0 flex-1 border border-[#2e2e2e] bg-white">
                <div className="min-w-0 flex-1 overflow-hidden pl-[6px]">
                  <div className="ml-[27px] h-2 w-[146px] border border-t-0 border-[#8f8f8f] pl-[2px] font-['DejaVu_Sans'] text-[3px] font-bold leading-[3px] text-[#1c0a24] shadow-[0_1px_3px_rgba(0,0,0,.45)]">
                    <p className="whitespace-nowrap">1. Mendoza-Vargas, Alfredo, et al. "Genome-wide identification of start sites,</p>
                    <p className="whitespace-nowrap">2. Zvelebil, Marketa J., and Jeremy O Baum. Understanding bioinformatics.</p>
                  </div>
                  <ol className="flex flex-col gap-[6px] pt-3">
                    {thumbs.map((t) => (
                      <li
                        key={t.n}
                        className={
                          "flex h-[122px] w-[179px] shrink-0 " +
                          (t.n === 26
                            ? "border-[3px] border-[#bd9182] bg-gradient-to-b from-[#e3a58e] to-[#ffc2ab] p-[3px] text-[#4a4a4a]"
                            : "p-[6px] text-[#7d7d7d]")
                        }
                      >
                        <span className="w-[21px] shrink-0 text-[15px] font-bold leading-3">{t.n}</span>
                        {t.el}
                      </li>
                    ))}
                  </ol>
                </div>
                <VScroll before="flex-[648]" thumb="flex-[212]" after="flex-[30]" />
              </div>
            </aside>
            <div className="relative w-2 shrink-0 border-x-2 border-b-[3px] border-t-2 border-[#353535]"><Handle label="Hide slide panel" /></div>

            <div className="flex min-w-0 flex-1 flex-col border-b border-[#2e2e2e]">
              <div className="flex min-h-0 flex-1">
                <div className="flex min-w-0 flex-1 justify-center overflow-hidden pr-2 pt-[14px]">
                  <article className="flex aspect-[4/3] w-[75.5%] shrink-0 flex-col self-start border border-[#8e8e93] bg-white px-[59px] shadow-[1px_3px_7px_1px_rgba(0,0,0,.4)]">
                    <h2 className="flex h-[150px] shrink-0 items-center pt-7 font-['Liberation_Serif',serif] text-[64px] leading-[72px] text-[#464653]">Improvement</h2>
                    <div className="h-px bg-[repeating-linear-gradient(90deg,#9fb8cd_0_3px,#fff_3px_4px)]" />
                    <p className="flex-1 pl-14 pt-[62px] font-['Liberation_Serif',serif] text-[11px] leading-4 text-black">HMM, Neuro network, Desicion tree.</p>
                    <div className="h-px bg-[repeating-linear-gradient(90deg,#9fb8cd_0_3px,#fff_3px_4px)]" />
                    <div className="h-[66px] shrink-0 pt-[10px]">
                      <svg viewBox="0 0 18 30" className="h-[30px] w-[18px]"><path d="M2 2l15 13L2 29z" fill="#8a8f95" /><path d="M0 0l15 14L0 27z" fill="#9fb8cd" /></svg>
                    </div>
                  </article>
                </div>
                <VScroll before="flex-[219]" thumb="flex-[474]" after="flex-[218]" />
              </div>
              <div className="mr-[14px] flex h-[13px] shrink-0 rounded-full border border-[#b5b4b2] bg-[#dcdbd9]">
                <button aria-label="Scroll left" className="flex w-3 items-center justify-center rounded-l-full bg-[#f4f4f3]"><Tri dir="left" /></button>
                <div className="flex-[441] rounded-l-full border-l border-[#b5b4b2]" />
                <div className="flex flex-[705] items-center justify-center gap-[2px] rounded-full border border-[#9c9b99] bg-gradient-to-b from-white to-[#e4e3e1]">
                  <i className="h-[3px] w-px bg-[#999]" /><i className="h-[3px] w-px bg-[#999]" /><i className="h-[3px] w-px bg-[#999]" />
                </div>
                <div className="flex-[440] rounded-r-full border-r border-[#b5b4b2]" />
                <button aria-label="Scroll right" className="flex w-3 items-center justify-center rounded-r-full bg-[#f4f4f3]"><Tri dir="right" /></button>
              </div>
            </div>
            <div className="relative w-2 shrink-0 border-b-[3px] border-l-2 border-t-2 border-[#353535]"><Handle label="Show sidebar" /></div>
          </div>

          <footer className="flex h-5 shrink-0 items-center whitespace-nowrap font-['Roboto',sans-serif] text-[13px] leading-5">
            <div className="flex-[618]" />
            <VSep />
            <div className="flex flex-[412] items-center">
              <svg viewBox="0 0 14 14" className="ml-2 mr-1.5 h-[14px] w-[14px] shrink-0" fill="none"><path d="M5 3.500h8.500v8h-11V6" stroke={D} /><path d="M2.500 0v5M0 2.500h5" stroke={B} /></svg>
              <span className="w-[182px]">-1.75 / 6.05</span>
              <svg viewBox="0 0 14 14" className="mr-2 h-[14px] w-[14px] shrink-0" fill="none"><path d="M4.500 6.500h9v5h-9z" stroke={D} /><path d="M4 2.500h10M4.500.500v4M13.500.500v4M1.500 5.500v7M0 5.500h3M0 12.500h3" stroke={B} /></svg>
              <span>0.00 x 0.00</span>
            </div>
            <VSep />
            <button aria-label="Document saved" className="flex w-[22px] justify-center">
              <svg viewBox="3 3 18 18" className="h-3 w-3 opacity-40">{icons.save}</svg>
            </button>
            <VSep />
            <div className="w-7" />
            <VSep />
            <span className="w-20 pl-[3px] text-[12px]">Slide 26 of 30</span>
            <VSep />
            <div className="flex-[485] text-[12px]"><span className="ml-2">Blank Slide</span></div>
            <VSep />
            <button aria-label="Fit slide" className="flex w-[22px] justify-center">
              <svg viewBox="0 0 12 12" className="h-3 w-3" fill={D}><path d="M6 0l2 2.500H4zM6 12l2-2.500H4zM0 6l2.500-2v4zM12 6L9.500 4v4zM5 5h2v2H5z" /></svg>
            </button>
            <VSep />
            <button aria-label="Zoom out" className="ml-2 w-2"><i className="block h-px w-2 bg-[#444]" /></button>
            <input
              type="range" aria-label="Zoom" defaultValue={49}
              className="mx-[6px] h-3 w-[97px] appearance-none bg-[linear-gradient(#2b2b2b,#2b2b2b)] bg-[length:100%_2px] bg-center bg-no-repeat [&::-webkit-slider-thumb]:h-2 [&::-webkit-slider-thumb]:w-2 [&::-webkit-slider-thumb]:appearance-none [&::-webkit-slider-thumb]:rounded-full [&::-webkit-slider-thumb]:border [&::-webkit-slider-thumb]:border-[#333] [&::-webkit-slider-thumb]:bg-white"
            />
            <button aria-label="Zoom in" className="mr-[7px] flex w-2">
              <svg viewBox="0 0 8 8" className="h-2 w-2"><path d="M4 0v8M0 4h8" stroke="#444" /></svg>
            </button>
            <VSep />
            <span className="w-[41px] pl-[5px]">126%</span>
          </footer>
        </main>
      </div>
    </div>
  );
}
